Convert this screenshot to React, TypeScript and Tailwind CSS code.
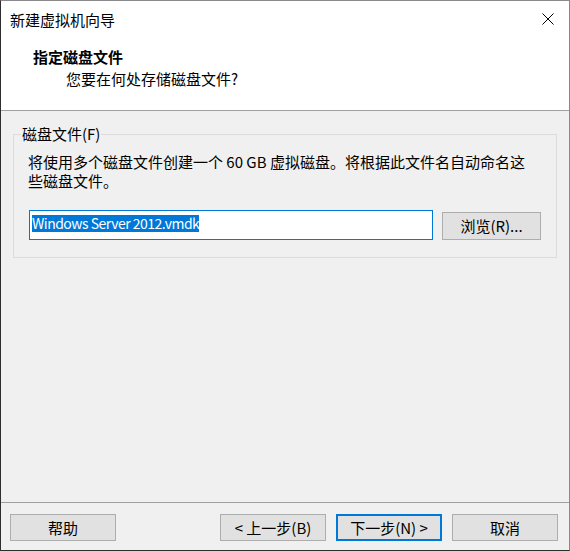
import React from "react";

const font = { fontFamily: '"Noto Sans CJK SC", "Noto Sans", sans-serif' };

function Btn({ children, primary = false }: { children: React.ReactNode; primary?: boolean }) {
  return (
    <div
      className={
        "w-[106px] h-[27px] flex items-center justify-center bg-[#e1e1e1] text-[15px] leading-[20px] text-black " +
        (primary ? "border-2 border-[#0078d7]" : "border border-[#adadad]")
      }
    >
      {children}
    </div>
  );
}

export default function App() {
  return (
    <div
      className="w-[570px] h-[551px] flex flex-col bg-[#f0f0f0] border-t border-r border-t-[#8a8a8a] border-r-[#8a8a8a] border-l border-b border-l-[#2e2e2e] border-b-[#2e2e2e] overflow-hidden"
      style={font}
    >
      <div className="bg-white h-[110px] border-b border-[#a0a0a0] flex flex-col shrink-0">
        <div className="flex items-start justify-between pt-[9px] pl-[9px] pr-[15px]">
          <span className="text-[15px] leading-[20px] text-black">新建虚拟机向导</span>
          <svg width="12" height="12" viewBox="0 0 12 12" className="mt-[3px]">
            <path d="M0.5 0.5 L11.5 11.5 M11.5 0.5 L0.5 11.5" stroke="#000" strokeWidth="1" />
          </svg>
        </div>
        <div className="pl-[32px] mt-[17px] text-[15px] leading-[20px] font-bold text-black">指定磁盘文件</div>
        <div className="pl-[65px] mt-[2px] text-[15px] leading-[20px] text-black">您要在何处存储磁盘文件?</div>
      </div>

      <div className="flex-1 flex flex-col">
        <div className="relative ml-[12px] mt-[23px] h-[124px] border border-[#dcdcdc] w-[544px]">
          <span className="absolute left-[7px] top-[-11px] bg-[#f0f0f0] px-[1px] text-[15px] leading-[20px] text-black">
            磁盘文件(F)
          </span>
          <div className="pl-[14px] pt-[17px] text-[15px] leading-[19px] text-black pr-[4px] whitespace-nowrap">
            将使用多个磁盘文件创建一个 60 GB 虚拟磁盘。将根据此文件名自动命名这
            <br />
            些磁盘文件。
          </div>
          <div className="flex items-end pl-[15px] mt-[20px]">
            <div className="w-[404px] h-[30px] bg-white border border-[#0078d7] flex items-center pl-[2px] pb-[3px]">
              <span className="bg-[#0078d7] text-white text-[14px] leading-[17px] tracking-[-0.5px]">Windows Server 2012.vmdk</span>
            </div>
            <div className="ml-[9px] w-[99px] h-[28px] bg-[#e1e1e1] border border-[#adadad] flex items-center justify-center text-[15px] leading-[20px] text-black">
              浏览(R)...
            </div>
          </div>
        </div>
      </div>

      <div className="h-[48px] border-t border-[#a0a0a0] flex items-start pt-[11px] pl-[9px] shrink-0">
        <Btn>帮助</Btn>
        <div className="ml-[104px] flex gap-[10px]">
          <Btn>&lt; 上一步(B)</Btn>
          <Btn primary>下一步(N) &gt;</Btn>
          <Btn>取消</Btn>
        </div>
      </div>
    </div>
  );
}
